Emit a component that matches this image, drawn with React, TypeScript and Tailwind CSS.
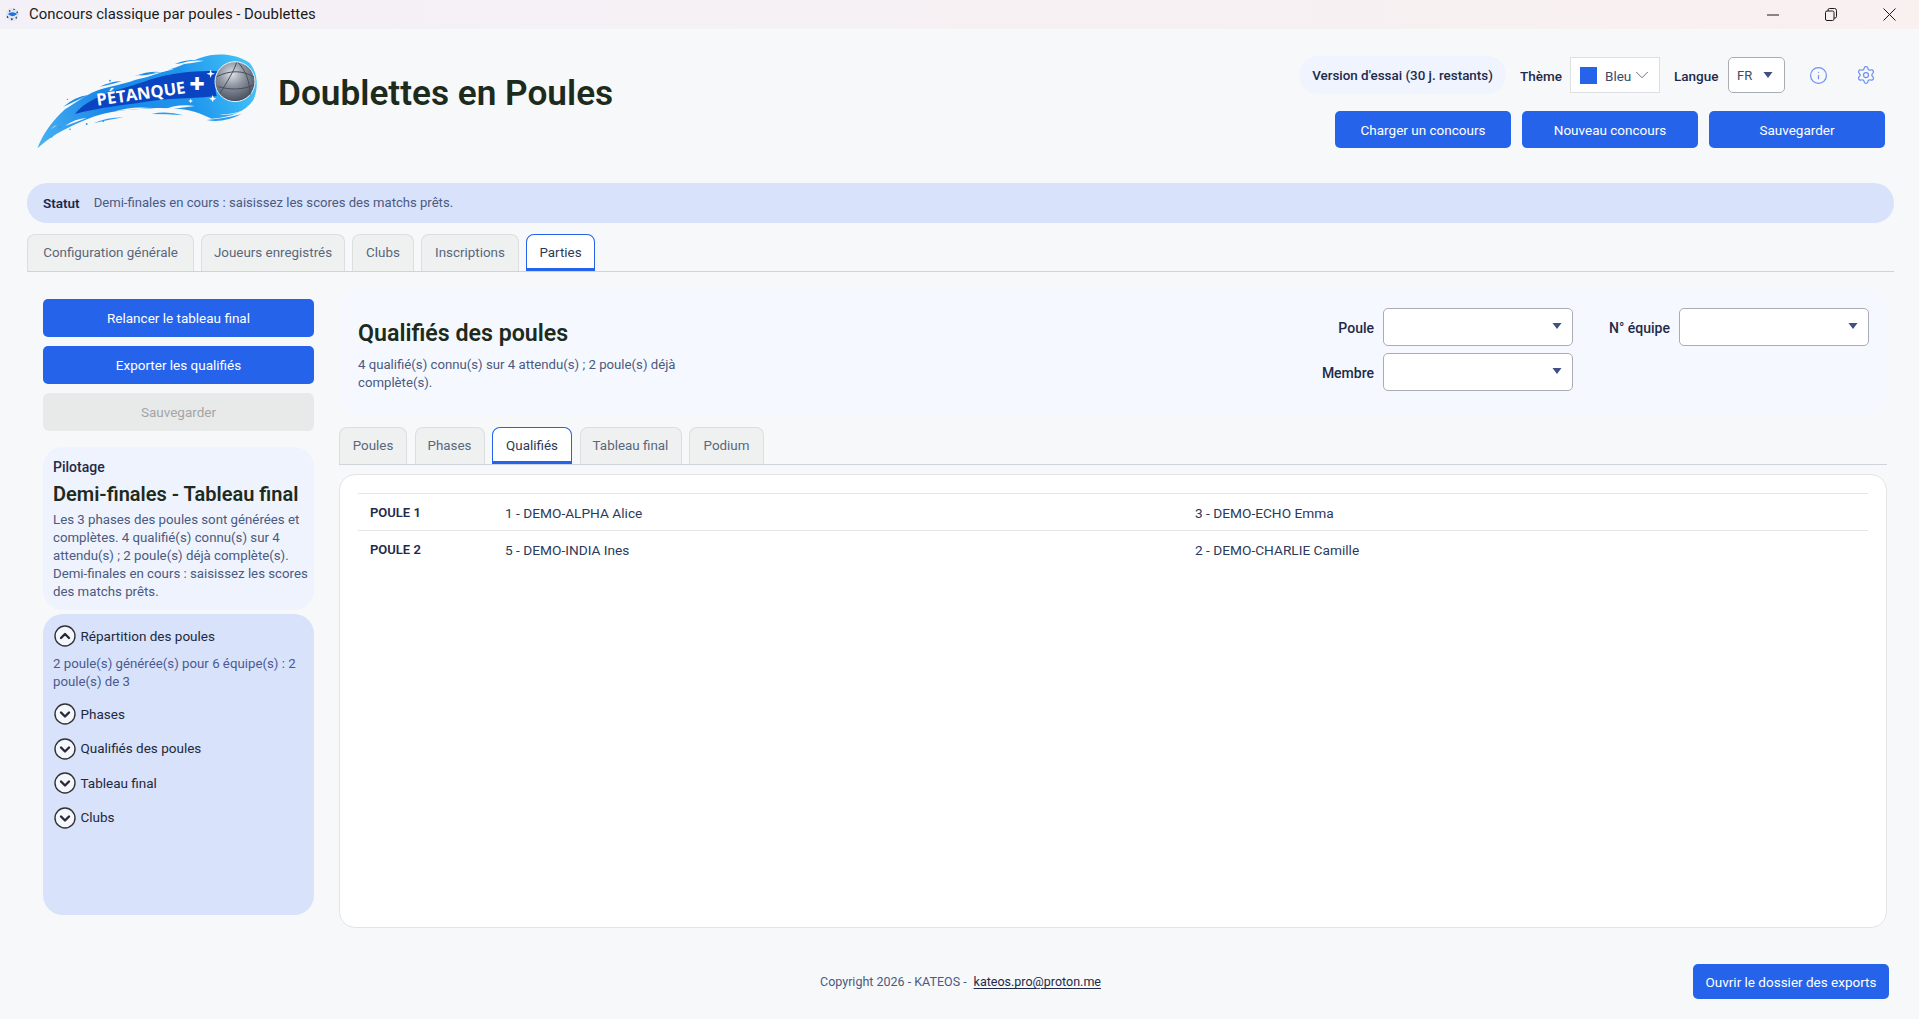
import { FC } from "react";
import { Info, Settings, ChevronDown } from "lucide-react";

const PrimaryButton: FC<{ label: string; className: string }> = ({ label, className }) => (
  <button className={`bg-[#2563eb] text-white text-[13.500px] pt-[1px] rounded-[5px] flex items-center justify-center ${className}`}>
    {label}
  </button>
);

const Triangle: FC<{ color?: string }> = ({ color = "#3f5082" }) => (
  <svg width="10" height="6" viewBox="0 0 10 6" className="shrink-0">
    <path d="M0.5 0h9L5 6z" fill={color} />
  </svg>
);

const TabButton: FC<{ label: string; active?: boolean; width: string }> = ({ label, active, width }) => (
  <div
    className={`${width} h-full flex items-center justify-center rounded-t-[8px] text-[13.400px] -mb-px ${
      active
        ? "bg-white text-[#2b3a55] border border-[#2563eb] border-b-[3px] pt-[3px]"
        : "bg-[#eff1f1] text-[#59677c] border border-[#dcdfe0] border-b-0 pt-[1px]"
    }`}
  >
    {label}
  </div>
);

const FilterSelect: FC<{ label: string; labelWidth: string; className?: string }> = ({ label, labelWidth, className }) => (
  <div className={`flex items-center ${className ?? ""}`}>
    <span className={`${labelWidth} pt-[2px] whitespace-nowrap text-right text-[14px] font-medium text-[#1e2a4a]`}>{label}</span>
    <div className="ml-[9px] w-[190px] h-[38px] bg-white border border-[#a9adb3] rounded-[5px] flex items-center justify-end pr-[10px] pb-[2px]">
      <Triangle />
    </div>
  </div>
);

const AccordionIcon: FC<{ open?: boolean }> = ({ open }) => (
  <svg width="22" height="22" viewBox="0 0 22 22" className="shrink-0 ml-[0.500px]">
    <circle cx="11" cy="11" r="10" fill="#f5f7fe" stroke="#333333" strokeWidth="1.4" />
    <path
      d={open ? "M7 13l4-4 4 4" : "M7 9.500l4 4 4-4"}
      fill="none"
      stroke="#2a2a30"
      strokeWidth="2.400"
      strokeLinecap="round"
      strokeLinejoin="round"
    />
  </svg>
);

const AccordionRow: FC<{ label: string; open?: boolean }> = ({ label, open }) => (
  <div className="flex items-center gap-[5px] h-[22px]">
    <AccordionIcon open={open} />
    <span className="text-[13.500px] text-[#22293a]">{label}</span>
  </div>
);

const Logo = () => (
  <svg width="250" height="120" viewBox="0 0 750 360" className="shrink-0">
    <defs>
      <linearGradient id="comet" x1="50" y1="325" x2="700" y2="80" gradientUnits="userSpaceOnUse">
        <stop offset="0" stopColor="#4ab4f2" />
        <stop offset="0.35" stopColor="#1a86e8" />
        <stop offset="0.7" stopColor="#1f96ee" />
        <stop offset="1" stopColor="#46c6f7" />
      </linearGradient>
      <radialGradient id="ball" cx="0.42" cy="0.3" r="0.78">
        <stop offset="0" stopColor="#dfe3e8" />
        <stop offset="0.4" stopColor="#8f96a2" />
        <stop offset="1" stopColor="#3a4150" />
      </radialGradient>
    </defs>
    {/* tail and flame */}
    <path
      d="M52 325C72 275 100 240 135 208C165 190 195 165 230 152C270 138 305 135 345 120C385 112 415 100 450 88C490 76 520 58 570 46C615 40 655 46 690 70C714 100 716 145 700 180C675 216 635 232 575 236C545 222 510 206 465 206C430 202 395 204 350 208C300 210 250 218 205 236C170 250 130 268 100 288C82 300 66 312 52 325Z"
      fill="url(#comet)"
    />
    {/* fingers of flame, around the edges */}
    <path d="M130 200Q165 170 205 165Q170 182 130 200ZM240 140Q270 124 305 124Q275 134 240 140ZM345 108Q385 92 425 96Q385 106 345 108ZM465 72Q495 58 535 60Q500 70 465 72Z" fill="#1f8ee8" />
    <path d="M560 240Q610 250 665 222Q615 236 560 240ZM395 222Q440 212 490 226Q440 222 395 222ZM220 250Q260 232 310 232Q262 240 220 250Z" fill="#2a9cf0" />
    {/* dark body under the name */}
    <path d="M165 222C205 170 290 152 370 126C430 104 510 90 596 94C585 120 585 150 590 168C530 176 440 172 350 190C285 198 225 206 165 222Z" fill="#0a44c0" />
    {/* light splashes cut in the flame */}
    <path d="M470 74Q510 58 552 62Q510 72 470 74ZM400 98Q430 86 462 88Q430 98 400 98ZM425 212Q470 190 525 198Q475 204 425 212ZM285 214Q335 198 395 204Q335 208 285 214ZM135 258Q165 236 200 234Q165 248 135 258ZM92 268Q102 258 112 254Q102 262 92 268ZM245 134Q262 126 278 127Q262 132 245 134ZM598 224Q640 224 678 208Q640 228 598 224ZM335 112Q350 104 368 104Q350 110 335 112Z" fill="#f7f8fa" />
    <circle cx="120" cy="262" r="3" fill="#2a9cf0" />
    <circle cx="150" cy="268" r="2.500" fill="#2a9cf0" />
    <circle cx="95" cy="290" r="2.500" fill="#2a9cf0" />
    <circle cx="200" cy="252" r="3" fill="#2a9cf0" />
    <circle cx="250" cy="244" r="2.500" fill="#2a9cf0" />
    <circle cx="270" cy="122" r="2.500" fill="#1a86e8" />
    <circle cx="142" cy="178" r="2" fill="#1a86e8" />
    <text
      x="232"
      y="197"
      transform="rotate(-8 232 197)"
      fill="#ffffff"
      fontFamily="'Open Sans', sans-serif"
      fontWeight="700"
      fontSize="50"
    >
      PÉTANQUE
    </text>
    <text x="508" y="160" fill="#ffffff" fontFamily="'Open Sans', sans-serif" fontWeight="800" fontSize="80">
      +
    </text>
    <path d="M572 88l3 10 10 3-10 3-3 10-3-10-10-3 10-3zM578 165l3 8 8 3-8 3-3 8-3-8-8-3 8-3zM512 176l2 5 5 2-5 2-2 5-2-5-5-2 5-2z" fill="#ffffff" />
    <circle cx="645" cy="125" r="60" fill="url(#ball)" stroke="#e8f4fc" strokeWidth="3" />
    <path d="M590 110C630 90 670 90 702 112M600 160C625 120 640 95 650 68M690 165C690 130 680 95 655 68M595 140C630 150 670 150 700 135" fill="none" stroke="#474d59" strokeWidth="3" />
  </svg>
);

const App = () => {
  return (
    <div className="w-screen h-screen overflow-hidden flex flex-col bg-[#f7f8fa] font-['Roboto',sans-serif]">
      <div className="h-[29px] shrink-0 flex items-center bg-gradient-to-r from-[#f3f1f7] to-[#f9f0f0]">
        <svg width="15" height="15" viewBox="0 0 16 16" className="ml-[5px]">
          <circle cx="8" cy="8" r="7" fill="#dfe7f2" />
          <path d="M3 7.500Q8 3.500 13 7.500Q8 12 3 7.500Z" fill="#1f6fe0" />
          <path d="M4 3l2 1-1 2zM9 1.500l2 1.500-2 .5zM13 4l1 3-2-1zM2 9l2 2-2 1zM6 12l3 .5-2 2zM11 11l2-1-1 3z" fill="#27344f" />
        </svg>
        <span className="ml-[9px] text-[14.900px] text-[#1a1a1a]">Concours classique par poules - Doublettes</span>
        <div className="ml-auto flex items-center gap-[46px] pr-[23px]">
          <svg width="12" height="2" viewBox="0 0 12 2"><path d="M0 1h12" stroke="#1a1a1a" strokeWidth="1" /></svg>
          <svg width="12" height="13" viewBox="0 0 12 13" fill="none" stroke="#1a1a1a" strokeWidth="1">
            <rect x="0.5" y="3" width="8.5" height="9.5" rx="1.5" />
            <path d="M3 3V2a1.5 1.5 0 0 1 1.5-1.5h5A2 2 0 0 1 11.5 2.500v6A1.500 1.500 0 0 1 10 10H9" />
          </svg>
          <svg width="13" height="13" viewBox="0 0 13 13"><path d="M0.500 0.500l12 12M12.500 0.500l-12 12" stroke="#1a1a1a" strokeWidth="1" /></svg>
        </div>
      </div>

      <header className="h-[154px] shrink-0 flex pl-[20px] pr-[34px]">
        <div className="flex items-start pt-[11px]">
          <Logo />
          <h1 className="ml-[8px] mt-[31px] text-[35.200px] leading-[44px] font-semibold text-[#1c2b1c]">Doublettes en Poules</h1>
        </div>
        <div className="ml-auto flex flex-col items-end pt-[27px]">
          <div className="flex items-center h-[38px] pr-[9px]">
            <div className="h-[38px] w-[207px] pt-[2px] rounded-full bg-[#eff4fe] flex items-center justify-center text-[13.400px] font-medium text-[#1e2a4a]">
              Version d'essai (30 j. restants)
            </div>
            <span className="ml-[14px] w-[42px] pt-[2px] whitespace-nowrap text-[13.500px] font-medium text-[#1e2a4a]">Thème</span>
            <div className="ml-[8px] w-[90px] h-[36px] bg-white border border-[#dddfe2] flex items-center pl-[9px]">
              <span className="w-[17px] h-[17px] shrink-0 bg-[#2563eb]" />
              <span className="ml-[8px] w-[26px] pt-[2px] text-[13.500px] text-[#3c4a66]">Bleu</span>
              <ChevronDown className="shrink-0 text-[#5a6678]" size={22} strokeWidth={1} />
            </div>
            <span className="ml-[14px] w-[44px] pt-[2px] whitespace-nowrap text-[13.500px] font-medium text-[#1e2a4a]">Langue</span>
            <div className="ml-[10px] w-[57px] h-[36px] bg-white border border-[#a9adb3] rounded-[5px] flex items-center pl-[8px] pr-[11px] justify-between">
              <span className="pt-[2px] text-[13px] text-[#3c4a66]">FR</span>
              <Triangle />
            </div>
            <Info className="ml-[24px] text-[#6f8ff5]" size={19} strokeWidth={1.5} />
            <Settings className="ml-[28px] text-[#6f8ff5]" size={20} strokeWidth={1.5} />
          </div>
          <div className="flex gap-[11px] mt-[17px]">
            <PrimaryButton label="Charger un concours" className="w-[176px] h-[37px]" />
            <PrimaryButton label="Nouveau concours" className="w-[176px] h-[37px]" />
            <PrimaryButton label="Sauvegarder" className="w-[176px] h-[37px]" />
          </div>
        </div>
      </header>

      <div className="ml-[27px] mr-[25px] h-[40px] shrink-0 rounded-[20px] bg-[#d8e2fb] flex items-center pl-[16px] text-[13.100px]">
        <span className="text-[13.500px] font-semibold text-[#1e2a4a]">Statut</span>
        <span className="ml-[14px] text-[#4a5a80]">Demi-finales en cours : saisissez les scores des matchs prêts.</span>
      </div>

      <div className="ml-[27px] mr-[25px] mt-[11px] h-[38px] shrink-0 flex gap-[7px] border-b border-[#d0d3d7]">
        <TabButton label="Configuration générale" width="w-[167px]" />
        <TabButton label="Joueurs enregistrés" width="w-[144px]" />
        <TabButton label="Clubs" width="w-[62px]" />
        <TabButton label="Inscriptions" width="w-[98px]" />
        <TabButton label="Parties" width="w-[69px]" active />
      </div>

      <div className="flex-1 min-h-0 flex pl-[43px] pr-[32px] pt-[17px]">
        <aside className="w-[271px] shrink-0 pt-[10px] flex flex-col">
          <PrimaryButton label="Relancer le tableau final" className="h-[38px]" />
          <PrimaryButton label="Exporter les qualifiés" className="h-[38px] mt-[9px]" />
          <div className="h-[38px] mt-[9px] pt-[1px] rounded-[6px] bg-[#e8e9e9] text-[#a5a5a5] text-[13.500px] flex items-center justify-center">
            Sauvegarder
          </div>
          <div className="mt-[16px] h-[163px] rounded-[20px] bg-[#eff3fd] pl-[10px] pr-[3px] pt-[10px]">
            <div className="text-[14px] leading-[20px] font-medium text-[#1e2a4a]">Pilotage</div>
            <div className="mt-[5px] text-[20px] leading-[24px] font-semibold text-[#1c2b1c] whitespace-nowrap">Demi-finales - Tableau final</div>
            <p className="mt-[5px] text-[13.250px] leading-[18px] text-[#4a5a80]">
              Les 3 phases des poules sont générées et complètes. 4 qualifié(s) connu(s) sur 4 attendu(s) ; 2 poule(s) déjà complète(s). Demi-finales en cours : saisissez les scores des matchs prêts.
            </p>
          </div>
          <div className="mt-[4px] h-[301px] rounded-[20px] bg-[#d8e2fb] pl-[10px] pr-[10px] pt-[11px]">
            <AccordionRow label="Répartition des poules" open />
            <p className="mt-[8px] text-[13.250px] leading-[18px] text-[#4a5a90]">2 poule(s) générée(s) pour 6 équipe(s) : 2 poule(s) de 3</p>
            <div className="mt-[12px] flex flex-col gap-[12.500px]">
              <AccordionRow label="Phases" />
              <AccordionRow label="Qualifiés des poules" />
              <AccordionRow label="Tableau final" />
              <AccordionRow label="Clubs" />
            </div>
          </div>
        </aside>

        <main className="flex-1 ml-[25px] flex flex-col min-w-0">
          <section className="h-[126px] shrink-0 rounded-[16px] bg-[#f5f8fe] flex pl-[19px] pr-[18px]">
            <div className="w-[340px] pt-[29px]">
              <h2 className="text-[23.200px] leading-[30px] font-semibold text-[#1c2b1c]">Qualifiés des poules</h2>
              <p className="mt-[8px] text-[13.200px] leading-[18px] text-[#4a5a80]">
                4 qualifié(s) connu(s) sur 4 attendu(s) ; 2 poule(s) déjà complète(s).
              </p>
            </div>
            <div className="ml-auto pt-[19px] flex items-start">
              <div className="flex flex-col gap-[7px] items-end">
                <FilterSelect label="Poule" labelWidth="w-[60px]" />
                <FilterSelect label="Membre" labelWidth="w-[60px]" />
              </div>
              <FilterSelect label="N° équipe" labelWidth="w-[61px]" className="ml-[36px]" />
            </div>
          </section>

          <div className="mt-[12px] h-[38px] shrink-0 flex gap-[7.500px] border-b border-[#d0d3d7]">
            <TabButton label="Poules" width="w-[68px]" />
            <TabButton label="Phases" width="w-[70px]" />
            <TabButton label="Qualifiés" width="w-[80px]" active />
            <TabButton label="Tableau final" width="w-[102px]" />
            <TabButton label="Podium" width="w-[75px]" />
          </div>

          <section className="mt-[9px] h-[454px] shrink-0 rounded-[16px] bg-white border border-[#e2e4e8] px-[18px] pt-[18px]">
            <div className="border-t border-[#e4e6e9] h-[37px] pt-[2px] flex items-center text-[13.700px] text-[#2b3a5c]">
              <span className="w-[147px] pl-[12px] text-[13px] font-semibold text-[#1e2a4a]">POULE 1</span>
              <span className="w-[690px]">1 - DEMO-ALPHA Alice</span>
              <span>3 - DEMO-ECHO Emma</span>
            </div>
            <div className="border-t border-[#e4e6e9] h-[37px] pt-[2px] flex items-center text-[13.700px] text-[#2b3a5c]">
              <span className="w-[147px] pl-[12px] text-[13px] font-semibold text-[#1e2a4a]">POULE 2</span>
              <span className="w-[690px]">5 - DEMO-INDIA Ines</span>
              <span>2 - DEMO-CHARLIE Camille</span>
            </div>
          </section>

          <footer className="flex items-center pt-[36px] -mr-[2px]">
            <div className="ml-[481px] pt-[2px] text-[12.500px] text-[#4a5a80]">
              Copyright 2026 - KATEOS -
              <a className="ml-[7px] underline underline-offset-2 text-[#1e2a4a]">kateos.pro@proton.me</a>
            </div>
            <PrimaryButton label="Ouvrir le dossier des exports" className="ml-auto w-[196px] h-[35px]" />
          </footer>
        </main>
      </div>
    </div>
  );
};

export default App;
